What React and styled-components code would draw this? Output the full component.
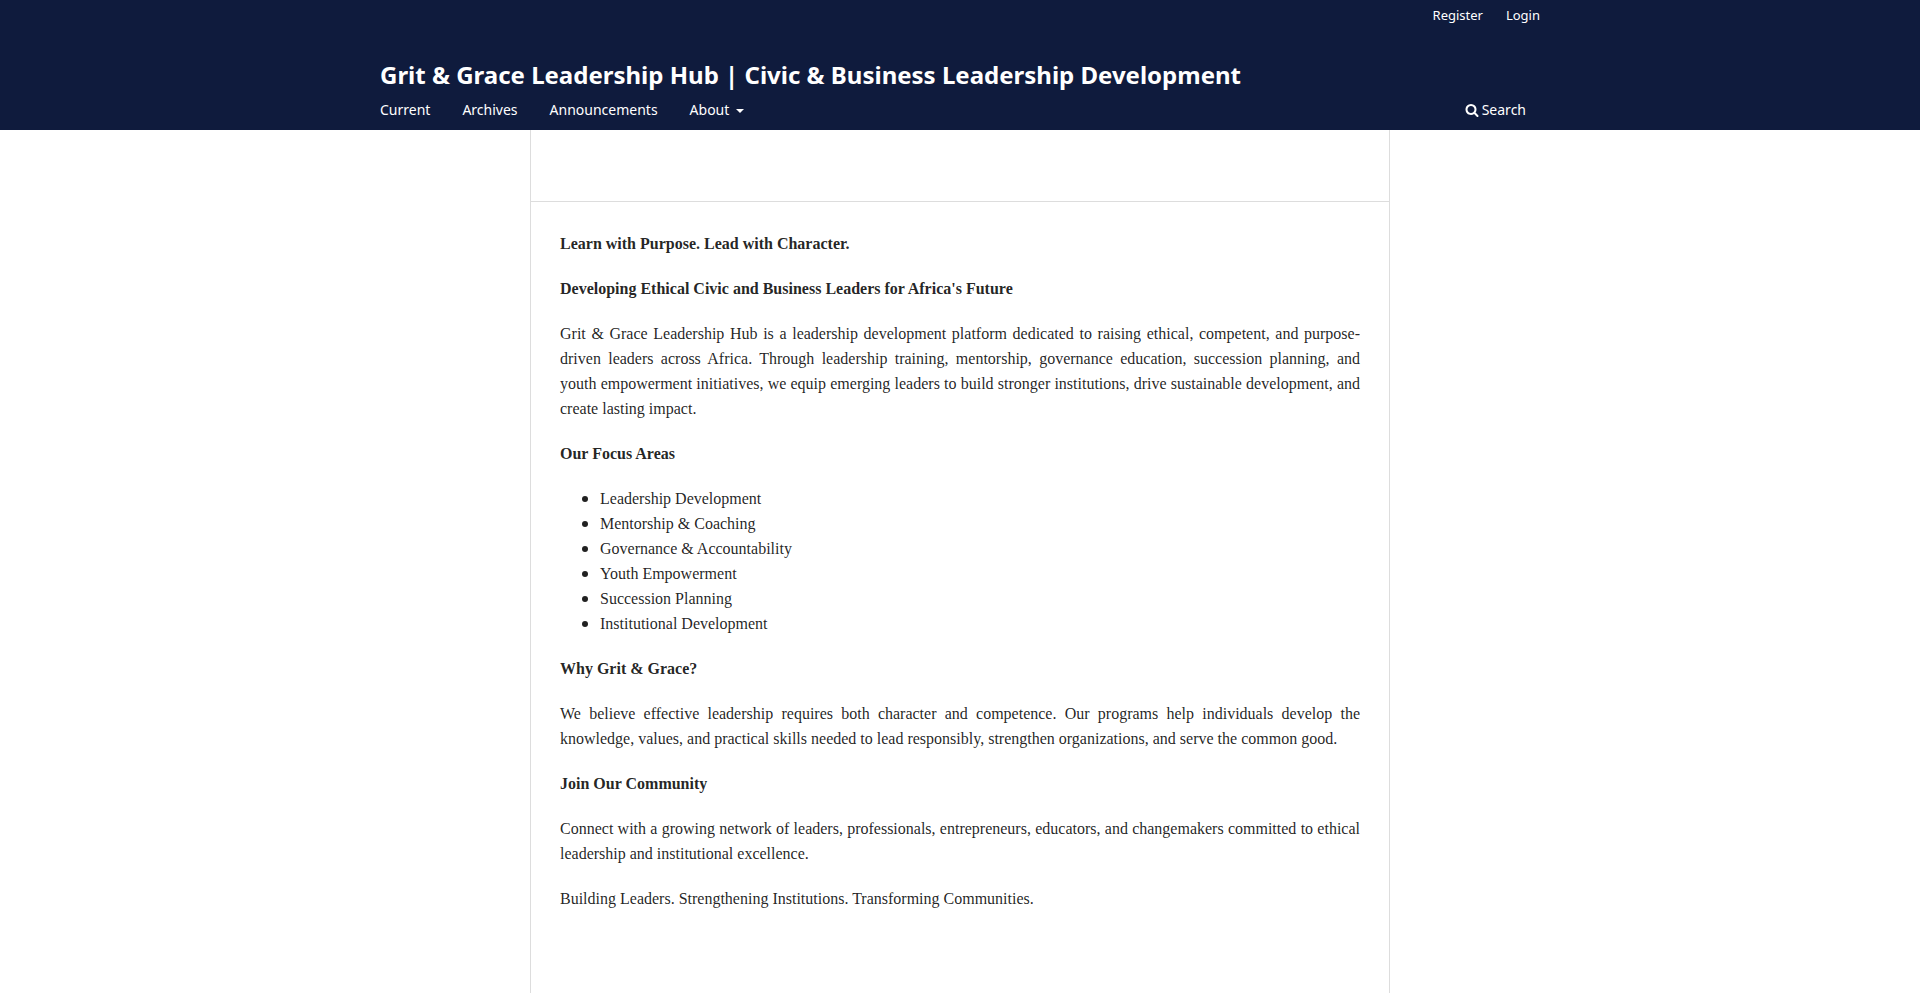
import React from "react";
import styled, { createGlobalStyle } from "styled-components";

const GlobalStyle = createGlobalStyle`
  *, *::before, *::after { box-sizing: border-box; }
  body {
    margin: 0;
    background: #fff;
    color: rgba(0, 0, 0, 0.87);
    font-family: "Noto Sans", "Open Sans", sans-serif;
    font-size: 14px;
    line-height: 20px;
  }
`;

const Page = styled.div`
  display: flex;
  flex-direction: column;
  min-height: 100vh;
`;

const Header = styled.header`
  background: #0f1b3d;
  color: #fff;
`;

const HeaderInner = styled.div`
  display: flex;
  flex-direction: column;
  max-width: 1160px;
  margin: 0 auto;
  padding: 5px 0 10px;
`;

const UserNav = styled.nav`
  display: flex;
  justify-content: flex-end;
  gap: 23px;
  margin-bottom: 35px;
`;

const NavLink = styled.a`
  color: #fff;
  font-size: ${({ $small }) => ($small ? 13 : 14)}px;
  line-height: 20px;
  text-decoration: none;
`;

const SiteName = styled.h1`
  margin: 0 0 10px;
  font-size: 24px;
  font-weight: 700;
  line-height: 30px;

  a {
    color: inherit;
    text-decoration: none;
  }
`;

const PrimaryRow = styled.div`
  display: flex;
  justify-content: space-between;
  padding-right: 14px;
`;

const PrimaryNav = styled.nav`
  display: flex;
  gap: 32px;
`;

const Caret = styled.span`
  display: inline-block;
  margin-left: 7px;
  border-top: 4px solid;
  border-right: 4px solid transparent;
  border-left: 4px solid transparent;
  vertical-align: middle;
`;

const SearchLink = styled(NavLink)`
  display: flex;
  align-items: center;
  gap: 3px;
`;

const Main = styled.main`
  flex: 1;
  width: 100%;
  max-width: 860px;
  margin: 0 auto;
  padding-top: 71px;
  border: solid #ddd;
  border-width: 0 1px;
`;

const Content = styled.section`
  padding: 29px 29px 90px;
  border-top: 1px solid #ddd;
  font-family: "Liberation Serif", "Times New Roman", serif;
  font-size: 16px;
  line-height: 25px;
`;

const Paragraph = styled.p`
  margin: 0 0 20px;
  text-align: justify;
`;

const Heading = styled.h2`
  margin: 0 0 20px;
  font-size: 16px;
  font-weight: 700;
  line-height: 25px;
`;

const FocusList = styled.ul`
  margin: 0 0 20px;
  padding-left: 40px;

  li::marker {
    font-family: "Noto Sans", sans-serif;
  }
`;

const SearchIcon = () => (
  <svg width="14" height="14" viewBox="0 0 1792 1792" fill="currentColor" aria-hidden="true">
    <path d="M1216 832q0-185-131.5-316.5t-316.5-131.5-316.5 131.5-131.5 316.5 131.5 316.5 316.5 131.5 316.5-131.5 131.5-316.5zm512 832q0 52-38 90t-90 38q-54 0-90-38l-343-342q-179 124-399 124-143 0-273.5-55.5t-225-150-150-225-55.5-273.5 55.5-273.5 150-225 225-150 273.5-55.5 273.5 55.5 225 150 150 225 55.5 273.5q0 220-124 399l343 343q37 37 37 90z" />
  </svg>
);

const focusAreas = [
  "Leadership Development",
  "Mentorship & Coaching",
  "Governance & Accountability",
  "Youth Empowerment",
  "Succession Planning",
  "Institutional Development",
];

export default function App() {
  return (
    <Page>
      <GlobalStyle />
      <Header>
        <HeaderInner>
          <UserNav aria-label="User">
            <NavLink $small href="#register">Register</NavLink>
            <NavLink $small href="#login">Login</NavLink>
          </UserNav>
          <SiteName>
            <a href="#home">Grit &amp; Grace Leadership Hub | Civic &amp; Business Leadership Development</a>
          </SiteName>
          <PrimaryRow>
            <PrimaryNav aria-label="Site">
              <NavLink href="#current">Current</NavLink>
              <NavLink href="#archives">Archives</NavLink>
              <NavLink href="#announcements">Announcements</NavLink>
              <NavLink href="#about">About<Caret /></NavLink>
            </PrimaryNav>
            <SearchLink href="#search"><SearchIcon />Search</SearchLink>
          </PrimaryRow>
        </HeaderInner>
      </Header>
      <Main>
        <Content>
          <Heading>Learn with Purpose. Lead with Character.</Heading>
          <Heading>Developing Ethical Civic and Business Leaders for Africa's Future</Heading>
          <Paragraph>
            Grit &amp; Grace Leadership Hub is a leadership development platform dedicated to raising
            ethical, competent, and purpose-driven leaders across Africa. Through leadership training,
            mentorship, governance education, succession planning, and youth empowerment initiatives,
            we equip emerging leaders to build stronger institutions, drive sustainable development,
            and create lasting impact.
          </Paragraph>
          <Heading>Our Focus Areas</Heading>
          <FocusList>
            {focusAreas.map((area) => (
              <li key={area}>{area}</li>
            ))}
          </FocusList>
          <Heading>Why Grit &amp; Grace?</Heading>
          <Paragraph>
            We believe effective leadership requires both character and competence. Our programs help
            individuals develop the knowledge, values, and practical skills needed to lead
            responsibly, strengthen organizations, and serve the common good.
          </Paragraph>
          <Heading>Join Our Community</Heading>
          <Paragraph>
            Connect with a growing network of leaders, professionals, entrepreneurs, educators, and
            changemakers committed to ethical leadership and institutional excellence.
          </Paragraph>
          <Paragraph>Building Leaders. Strengthening Institutions. Transforming Communities.</Paragraph>
        </Content>
      </Main>
    </Page>
  );
}
